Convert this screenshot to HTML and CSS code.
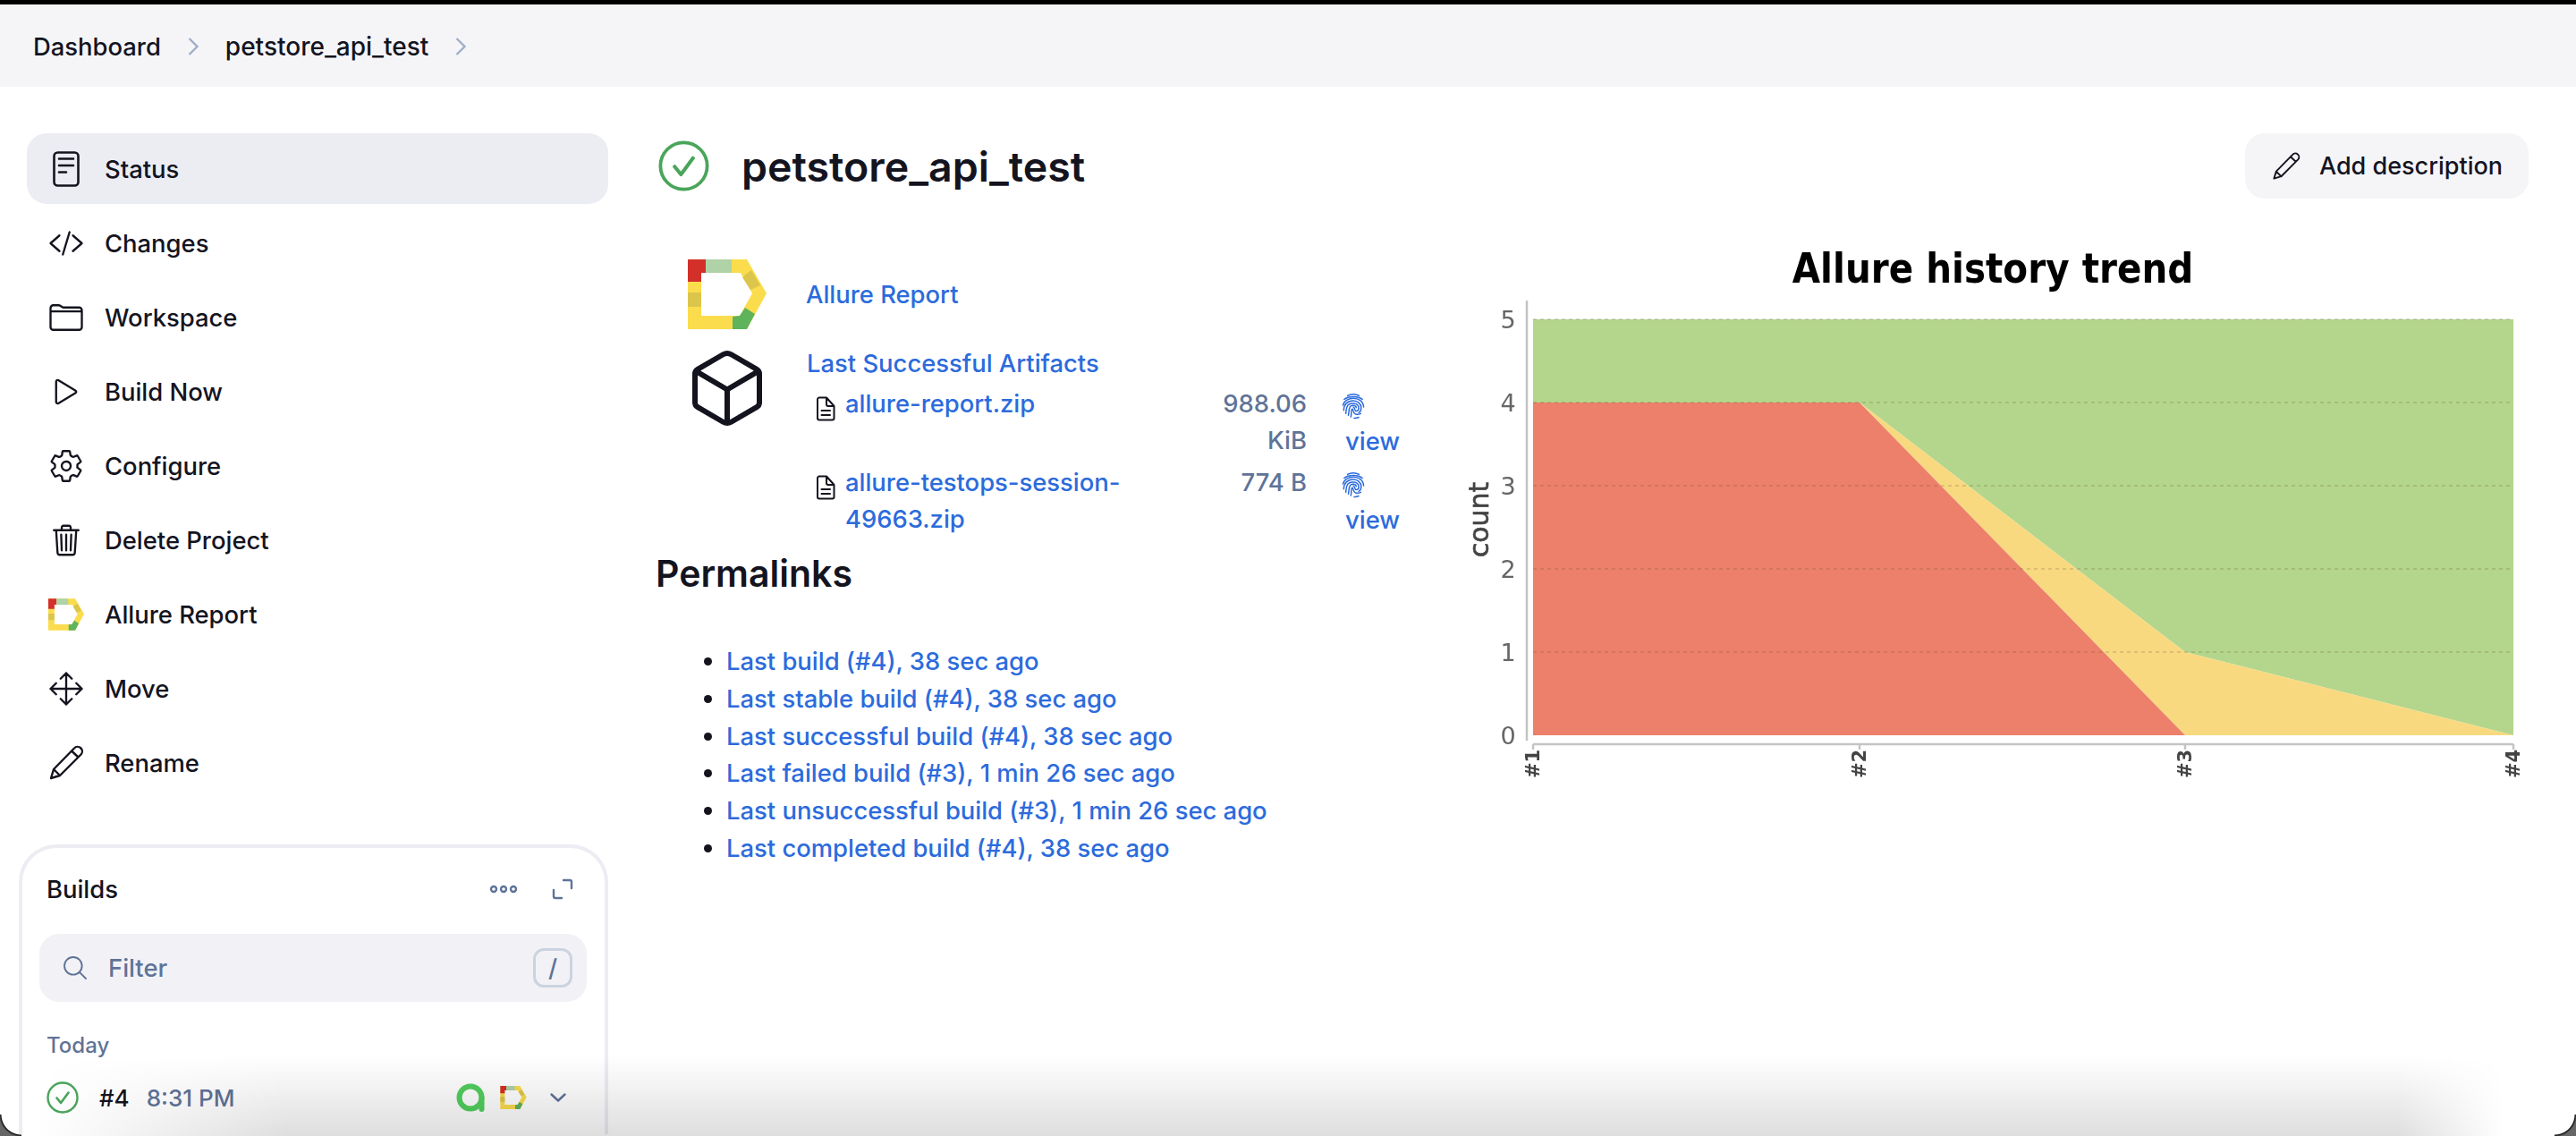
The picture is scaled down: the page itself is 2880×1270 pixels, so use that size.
FILE: index.html
```html
<!DOCTYPE html>
<html>
<head>
	<meta charset="utf-8">
	<title>petstore_api_test</title>
	<link rel="stylesheet" href="styles.css">
</head>
<body>
<svg class="defs" width="0" height="0">
	<symbol id="allure" viewBox="0 0 88 78">
		<path fill="#fbdc4c" fill-rule="evenodd" d="M0 0H66L88 38L66 78H0ZM15 15V63H58L72 38L59 15Z"/>
		<path fill="#d3302a" d="M0 0H20V15H15V25H0Z"/>
		<path fill="#afd2a6" d="M20 0H49V15H20Z"/>
		<path fill="#dcc54b" d="M0 37H15V53H0ZM61 20L71 12L81 29L70 34Z"/>
		<path fill="#5fb35a" d="M50 64L58 63L64 54L75 61L66 78H50Z"/>
	</symbol>
	<symbol id="passed" viewBox="0 0 36 36">
		<circle cx="18" cy="18" r="16.5" fill="none" stroke="#4aa55a" stroke-width="2.4"/>
		<path d="M11.5 18.5L16 24L24.5 12.5" fill="none" stroke="#4aa55a" stroke-width="2.6" stroke-linecap="round" stroke-linejoin="round"/>
	</symbol>
	<symbol id="pencil" viewBox="0 0 40 40">
		<path d="M3 37L6 27L29 3.500A4.500 4.500 0 0136.500 10.500L13 34ZM6 27L13 34M26 6.500L33.500 13.500" fill="none" stroke="#14141f" stroke-width="2.400" stroke-linecap="round" stroke-linejoin="round"/>
	</symbol>
	<symbol id="file" viewBox="0 0 22 28">
		<path d="M2 3.500A2 2 0 014 1.500H12L20.500 11V24.500A2 2 0 0118.500 26.500H4A2 2 0 012 24.500ZM12 1.500V9A2 2 0 0014 11H20.500M6.500 16H16M6.500 21H16" fill="none" stroke="#14141f" stroke-width="2" stroke-linejoin="round" stroke-linecap="round"/>
	</symbol>
	<symbol id="print" viewBox="0 0 28 32">
		<g fill="none" stroke="#2c6bdc" stroke-width="1.600" stroke-linecap="round">
			<path d="M7 3.500C11 1 17 1 21 3.500"/>
			<path d="M3 8C8 3.500 20 3.500 25 8"/>
			<path d="M1.500 15C3 9 9 6.500 14 6.500C20 6.500 26 10 26.500 17"/>
			<path d="M2.500 21C2.500 14 7 9.500 14 9.500C19.500 9.500 23.500 13.500 23.500 18C23.500 21 22.500 23 20.500 24"/>
			<path d="M5 25C5.500 21 5 18 7.500 15C10.500 11.500 20.500 11.500 20.500 18.500C20.500 21 19 22 17.500 22C15 22 16.500 17.500 14 17"/>
			<path d="M8 27C9 23 8.500 19.500 10 17C12 14 17.500 15 17.500 18"/>
			<path d="M11 29C12.500 25 10.500 21 12.500 19.500C14 18.500 13 24 16.500 25.500C18.500 26.500 21 26 23 25"/>
			<path d="M15 30.500C17 31 19 30 20.500 29.500"/>
		</g>
	</symbol>
</svg>

<div class="crumbs">
	<span>Dashboard</span>
	<svg class="sep" viewBox="0 0 14 22"><path d="M2.500 2L11.500 11L2.500 20"/></svg>
	<span class="crumb-job">petstore_api_test</span>
	<svg class="sep" viewBox="0 0 14 22"><path d="M2.500 2L11.500 11L2.500 20"/></svg>
</div>

<div class="layout">
	<div class="sidebar">
		<ul class="tasks">
			<li class="current">
				<svg class="ico" viewBox="0 0 40 40"><rect x="6.500" y="1.500" width="27" height="37" rx="4"/><path d="M12 8.500H28M12 16H28M12 23.500H20"/></svg>
				Status
			</li>
			<li>
				<svg class="ico" viewBox="0 0 512 512"><path class="ion" d="M160 368L32 256l128-112M352 368l128-112-128-112M304 96l-96 320"/></svg>
				Changes
			</li>
			<li>
				<svg class="ico" viewBox="0 0 512 512"><path class="ion" d="M440 432H72a40 40 0 01-40-40V120a40 40 0 0140-40h75.890a40 40 0 0122.190 6.720l27.840 18.560a40 40 0 0022.190 6.720H440a40 40 0 0140 40v240a40 40 0 01-40 40zM32 168h448"/></svg>
				Workspace
			</li>
			<li>
				<svg class="ico" viewBox="0 0 512 512"><path class="ion" d="M112 111v290c0 17.440 17 28.520 31 20.160l247.900-148.370c12.120-7.250 12.120-26.330 0-33.580L143 90.840c-14-8.360-31 2.720-31 20.160z"/></svg>
				Build Now
			</li>
			<li>
				<svg class="ico" viewBox="0 0 512 512"><path class="ion" d="M262.290 192.310a64 64 0 1057.400 57.400 64.130 64.130 0 00-57.400-57.400zM416.390 256a154.340 154.340 0 01-1.530 20.790l45.210 35.460a10.810 10.810 0 012.450 13.750l-42.770 74a10.810 10.810 0 01-13.140 4.590l-44.900-18.080a16.110 16.110 0 00-15.170 1.750A164.480 164.480 0 01325 400.800a15.940 15.940 0 00-8.820 12.140l-6.730 47.890a11.080 11.080 0 01-10.680 9.170h-85.540a11.110 11.110 0 01-10.690-8.870l-6.720-47.820a16.070 16.070 0 00-9-12.220 155.300 155.300 0 01-21.460-12.570 16 16 0 00-15.110-1.710l-44.890 18.070a10.810 10.810 0 01-13.140-4.580l-42.770-74a10.800 10.800 0 012.450-13.750l38.210-30a16.050 16.050 0 006-14.080c-.36-4.170-.58-8.330-.58-12.500s.21-8.270.58-12.350a16 16 0 00-6.070-13.940l-38.190-30A10.810 10.810 0 0149.480 186l42.770-74a10.810 10.810 0 0113.140-4.590l44.900 18.080a16.110 16.110 0 0015.170-1.750A164.480 164.480 0 01187 111.200a15.940 15.940 0 008.820-12.140l6.730-47.890A11.080 11.080 0 01213.230 42h85.540a11.110 11.110 0 0110.690 8.870l6.720 47.820a16.070 16.070 0 009 12.220 155.300 155.300 0 0121.460 12.570 16 16 0 0015.110 1.710l44.890-18.070a10.810 10.810 0 0113.140 4.580l42.770 74a10.800 10.800 0 01-2.450 13.750l-38.210 30a16.050 16.050 0 00-6.050 14.080c.33 4.140.55 8.300.55 12.470z"/></svg>
				Configure
			</li>
			<li>
				<svg class="ico" viewBox="0 0 512 512"><path class="ion" d="M112 112l20 320c.95 18.490 14.400 32 32 32h184c17.670 0 30.870-13.510 32-32l20-320M80 112h352M192 112V72a23.930 23.930 0 0124-24h80a23.930 23.930 0 0124 24v40M256 176v224M184 176l8 224M328 176l-8 224"/></svg>
				Delete Project
			</li>
			<li>
				<svg class="ico logo"><use href="#allure"/></svg>
				Allure Report
			</li>
			<li>
				<svg class="ico" viewBox="0 0 512 512"><path class="ion" d="M176 112l80-80 80 80M256 32v448M176 400l80 80 80-80M400 176l80 80-80 80M112 176l-80 80 80 80M32 256h448"/></svg>
				Move
			</li>
			<li>
				<svg class="ico"><use href="#pencil"/></svg>
				Rename
			</li>
		</ul>

		<div class="builds">
			<div class="builds-head">
				<span class="builds-title">Builds</span>
				<svg class="dots" viewBox="0 0 32 10"><circle cx="5" cy="5" r="3"/><circle cx="16" cy="5" r="3"/><circle cx="27" cy="5" r="3"/></svg>
				<svg class="expand" viewBox="0 0 24 24"><path d="M13 2H20A2 2 0 0122 4V11M2 13V20A2 2 0 004 22H11"/></svg>
			</div>
			<div class="filter">
				<svg class="search" viewBox="0 0 512 512"><path d="M221.090 64a157.090 157.090 0 10157.090 157.090A157.100 157.100 0 00221.090 64zM338.290 338.290L448 448"/></svg>
				<span class="filter-text">Filter</span>
				<kbd class="key">/</kbd>
			</div>
			<div class="day">Today</div>
			<div class="build-row">
				<svg class="build-state"><use href="#passed"/></svg>
				<span class="build-no">#4</span>
				<span class="build-time">8:31 PM</span>
				<svg class="testops" viewBox="0 0 34 34"><circle cx="16" cy="17" r="12.500"/><path d="M28.500 17V30"/></svg>
				<svg class="build-logo"><use href="#allure"/></svg>
				<svg class="caret" viewBox="0 0 18 10"><path d="M1.500 1.500L9 8.500L16.500 1.500"/></svg>
			</div>
		</div>
	</div>

	<div class="main">
		<div class="head">
			<svg class="head-state"><use href="#passed"/></svg>
			<h1>petstore_api_test</h1>
			<div class="add-desc">
				<svg class="add-ico"><use href="#pencil"/></svg>
				Add description
			</div>
		</div>

		<div class="content">
			<div class="left">
				<div class="action allure-row">
					<svg class="action-logo"><use href="#allure"/></svg>
					<a>Allure Report</a>
				</div>
				<div class="action">
					<svg class="cube" viewBox="0 0 512 512"><path d="M448 341.370V170.610A32 32 0 00432.110 143l-152-88.460a47.940 47.940 0 00-48.240 0L79.890 143A32 32 0 0064 170.610v170.760A32 32 0 0079.890 369l152 88.460a48 48 0 0048.240 0l152-88.460A32 32 0 00448 341.370zM69 153.990l187 110 187-110M256 463.990v-200"/></svg>
					<div class="artifacts">
						<a>Last Successful Artifacts</a>
						<div class="files">
							<svg class="file-ico"><use href="#file"/></svg>
							<a>allure-report.zip</a>
							<span class="size">988.06 KiB</span>
							<a class="view"><svg class="print"><use href="#print"/></svg><span>view</span></a>

							<svg class="file-ico"><use href="#file"/></svg>
							<a class="name-two">allure-testops-session-49663.zip</a>
							<span class="size">774 B</span>
							<a class="view"><svg class="print"><use href="#print"/></svg><span>view</span></a>
						</div>
					</div>
				</div>

				<h2>Permalinks</h2>
				<ul class="permalinks">
					<li><a>Last build (#4), 38 sec ago</a></li>
					<li><a>Last stable build (#4), 38 sec ago</a></li>
					<li><a>Last successful build (#4), 38 sec ago</a></li>
					<li><a>Last failed build (#3), 1 min 26 sec ago</a></li>
					<li><a>Last unsuccessful build (#3), 1 min 26 sec ago</a></li>
					<li><a>Last completed build (#4), 38 sec ago</a></li>
				</ul>
			</div>

			<svg class="chart" viewBox="1630 262 1197 618">
				<text class="chart-title" transform="translate(2228 316) scale(1 1.120)">Allure history trend</text>
				<polygon fill="#b4d68c" points="1714,357 2810,357 2810,822 2443,729 2079,450 1714,450"/>
				<polygon fill="#f8d980" points="2079,450 2443,729 2810,822 2443,822"/>
				<polygon fill="#ec806b" points="1714,822 1714,450 2079,450 2443,822"/>
				<path class="grid" d="M1714 357H2810M1714 450H2810M1714 543H2810M1714 636H2810M1714 729H2810"/>
				<path class="axis" d="M1707 336V828M1714 832H2810M1714 832V838M2079 832V838M2443 832V838M2810 832V838"/>
				<g class="tick">
					<text x="1686" y="367">5</text>
					<text x="1686" y="460">4</text>
					<text x="1686" y="553">3</text>
					<text x="1686" y="646">2</text>
					<text x="1686" y="739">1</text>
					<text x="1686" y="832">0</text>
				</g>
				<text class="count" transform="translate(1664 581) rotate(-90)">count</text>
				<g class="xtick">
					<text transform="translate(1721 870) rotate(-90)">#1</text>
					<text transform="translate(2086 870) rotate(-90)">#2</text>
					<text transform="translate(2450 870) rotate(-90)">#3</text>
					<text transform="translate(2817 870) rotate(-90)">#4</text>
				</g>
			</svg>
		</div>
	</div>
</div>

<div class="shade"></div>
<div class="corner corner-left"></div>
<div class="corner corner-right"></div>
</body>
</html>
```
FILE: styles.css
```css
html,body{margin:0;padding:0;height:1270px;overflow:hidden;}
body{position:relative;background:#fff;color:#14141f;font:450 27.400px/41px Inter,"Liberation Sans",sans-serif;border-top:5px solid #000;box-sizing:border-box;}
ul,h1,h2{margin:0;padding:0;}
a{color:#2c6bdc;}
.defs{position:absolute;}

.crumbs{display:flex;align-items:center;height:92px;padding:2px 0 0 37px;box-sizing:border-box;background:#f5f5f8;}
.crumb-job{font-size:28px;}
.sep{width:14px;height:24px;margin:0 29px;fill:none;stroke:#a0afc8;stroke-width:2.400;}

.layout{display:flex;padding:52px 0 0 21px;}
.sidebar{width:659px;flex:none;}
.main{flex:1;margin-left:53px;padding-right:53px;min-width:0;}

.tasks{list-style:none;margin-left:9px;width:650px;}
.tasks li{display:flex;align-items:center;height:79px;margin-bottom:4px;padding:1px 0 0 24px;box-sizing:border-box;border-radius:22px;}
.tasks li.current{background:#ecedf3;}
.ico{width:40px;height:40px;margin-right:23px;flex:none;fill:none;stroke:#14141f;stroke-width:2.600;stroke-linejoin:round;stroke-linecap:round;}
.ico .ion{stroke-width:30;}
.ico.logo{height:36px;stroke:none;}

.builds{height:324px;margin-top:52px;padding:0 24px 0 27px;border:4px solid #ecedf3;border-bottom:0;border-radius:42px 42px 0 0;box-sizing:border-box;}
.builds-head{display:flex;align-items:center;height:92px;}
.builds-title{flex:1;}
.dots{width:32px;height:10px;fill:none;stroke:#5f7397;stroke-width:2.400;margin-right:38px;}
.expand{width:24px;height:24px;margin-right:11px;fill:none;stroke:#5f7397;stroke-width:2.400;stroke-linecap:round;}
.filter{display:flex;align-items:center;height:76px;margin:4px -4px 0 -8px;padding:0 16px 0 24px;background:#f2f2f6;border-radius:22px;color:#5f7397;}
.search{width:32px;height:32px;margin-right:21px;fill:none;stroke:#5f7397;stroke-width:30;stroke-linecap:round;}
.filter-text{flex:1;}
.key{display:flex;align-items:center;justify-content:center;width:44px;height:44px;border:3px solid #ccd3e0;border-radius:12px;box-sizing:border-box;font:inherit;}
.day{margin-top:28px;font-size:24px;color:#5f7397;}
.build-row{display:flex;align-items:center;margin-top:18px;height:40px;font-size:26px;}
.build-state{width:36px;height:36px;margin-right:23px;flex:none;}
.build-no{margin-right:19px;}
.build-time{flex:1;color:#5f7397;}
.testops{width:34px;height:34px;margin-right:15px;fill:none;stroke:#52cf5e;stroke-width:6;stroke-linecap:round;}
.build-logo{width:30px;height:26px;margin-right:26px;}
.caret{width:18px;height:10px;margin-right:19px;fill:none;stroke:#5f7397;stroke-width:2.400;stroke-linecap:round;stroke-linejoin:round;}

.head{display:flex;align-items:center;height:73px;}
.head-state{width:57px;height:57px;margin:0 3px;flex:none;}
h1{flex:1;margin-left:33px;font-size:46.500px;line-height:56px;font-weight:600;}
.add-desc{display:flex;align-items:center;height:73px;padding:0 29px 0 30px;background:#f5f5f8;border-radius:22px;font-size:27px;}
.add-ico{width:32px;height:32px;margin-right:21px;}

.content{display:flex;margin-top:40px;}
.left{width:897px;flex:none;padding-top:28px;}
.chart{width:1197px;height:618px;flex:none;filter:blur(.5px);}

.action{display:flex;padding-left:36px;}
.allure-row{align-items:center;height:78px;margin-bottom:18px;}
.action-logo{width:88px;height:78px;flex:none;}
.allure-row a{margin-left:44px;}
.cube{width:96px;height:96px;margin:0 41px 0 -4px;flex:none;fill:none;stroke:#14141f;stroke-width:32;stroke-linecap:round;stroke-linejoin:round;}
.artifacts{flex:1;}
.files{display:grid;grid-template-columns:22px 397px 130px 62px;row-gap:5px;margin:4px 0 0 10px;}
.file-ico{width:22px;height:28px;margin-top:12px;}
.files a{margin-left:11px;}
.size{justify-self:end;width:110px;text-align:right;color:#5f7397;}
.view{display:block;}
.files .view{margin-left:39px;}
.print{display:block;width:26px;height:30px;margin-top:8px;}
.view span{display:block;margin:4px 0 0 4px;}
.name-two{display:block;width:340px;}

h2{margin-top:11px;font-size:41px;line-height:56px;font-weight:600;}
.permalinks{margin:50px 0 0 79px;list-style:disc;line-height:41.800px;}

.chart-title{font:bold 40.500px "DejaVu Sans",sans-serif;fill:#000;text-anchor:middle;}
.grid{fill:none;stroke:rgba(90,70,40,.18);stroke-width:2;stroke-dasharray:4 4;}
.axis{fill:none;stroke:#c4c4c4;stroke-width:2.500;}
.tick text{font:27px "DejaVu Sans",sans-serif;fill:#666;text-anchor:middle;}
.count{font:30px "DejaVu Sans",sans-serif;fill:#444;stroke:#444;stroke-width:.6;text-anchor:middle;}
.xtick text{font:bold 21px "DejaVu Sans",sans-serif;fill:#444;}

.shade{position:absolute;left:0;right:0;bottom:0;height:90px;pointer-events:none;background:linear-gradient(rgba(0,0,0,0),rgba(0,0,0,.13));-webkit-mask-image:linear-gradient(90deg,transparent 40px,#000 320px,#000 2680px,transparent 2800px);mask-image:linear-gradient(90deg,transparent 40px,#000 320px,#000 2680px,transparent 2800px);}
.corner{position:absolute;bottom:0;width:24px;height:24px;pointer-events:none;}
.corner-left{left:0;background:radial-gradient(circle at 100% 0,transparent 22px,#111 23px,#666 25px);}
.corner-right{right:0;background:radial-gradient(circle at 0 0,transparent 22px,#111 23px,#666 25px);}
```
